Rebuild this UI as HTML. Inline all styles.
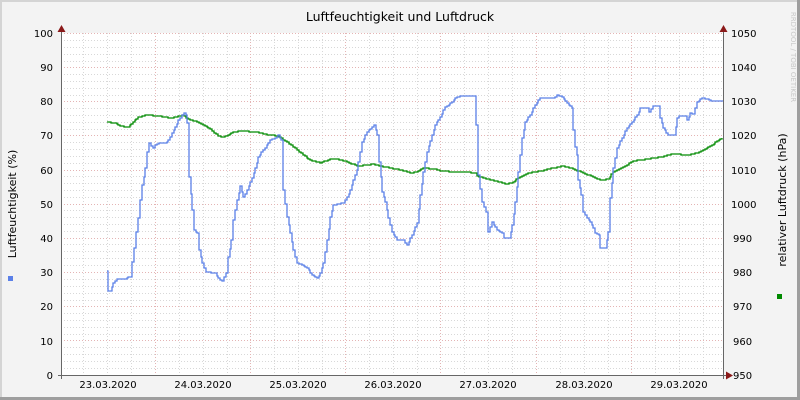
<!DOCTYPE html>
<html><head><meta charset="utf-8"><style>
html,body{margin:0;padding:0;background:#f3f3f3}
svg{display:block}
text{font-family:"DejaVu Sans","Liberation Sans",sans-serif;fill:#000}
</style></head><body>
<svg width="800" height="400" viewBox="0 0 800 400" xmlns="http://www.w3.org/2000/svg">
<rect x="0" y="0" width="800" height="400" fill="#f3f3f3"/>
<rect x="0" y="0" width="800" height="2" fill="#d4d4d4"/>
<rect x="0" y="0" width="2" height="400" fill="#d4d4d4"/>
<rect x="0" y="397" width="800" height="3" fill="#9e9e9e"/>
<rect x="797" y="0" width="3" height="400" fill="#9e9e9e"/>
<rect x="61" y="33" width="662" height="342" fill="#ffffff"/>
<g id="grid" stroke-width="1" shape-rendering="crispEdges">
<g stroke="#d8d8d8" stroke-dasharray="1,2">
<path d="M61 40.5H723M61 47.5H723M61 54.5H723M61 61.5H723M61 74.5H723M61 81.5H723M61 88.5H723M61 95.5H723M61 108.5H723M61 115.5H723M61 122.5H723M61 129.5H723M61 142.5H723M61 149.5H723M61 156.5H723M61 163.5H723M61 176.5H723M61 183.5H723M61 190.5H723M61 197.5H723M61 210.5H723M61 217.5H723M61 224.5H723M61 231.5H723M61 244.5H723M61 251.5H723M61 258.5H723M61 265.5H723M61 279.5H723M61 286.5H723M61 293.5H723M61 300.5H723M61 313.5H723M61 320.5H723M61 327.5H723M61 334.5H723M61 347.5H723M61 354.5H723M61 361.5H723M61 368.5H723"/>
<path d="M83.5 33V375M107.5 33V375M131.5 33V375M179.5 33V375M203.5 33V375M227.5 33V375M274.5 33V375M298.5 33V375M322.5 33V375M369.5 33V375M393.5 33V375M417.5 33V375M464.5 33V375M488.5 33V375M512.5 33V375M560.5 33V375M584.5 33V375M608.5 33V375M655.5 33V375M679.5 33V375M703.5 33V375"/>
</g>
<g stroke="#e4b4b4" stroke-dasharray="1,2">
<path d="M61 33.5H723M61 67.5H723M61 101.5H723M61 135.5H723M61 170.5H723M61 204.5H723M61 238.5H723M61 272.5H723M61 306.5H723M61 340.5H723"/>
<path d="M155.5 33V375M250.5 33V375M345.5 33V375M440.5 33V375M536.5 33V375M631.5 33V375"/>
</g>
</g>
<g fill="none" stroke-width="1.3" stroke-linejoin="miter" class="steps">
<polyline stroke="#008a00" points="107,122 115,123 120,126 128,127 133,122 138,117 147,115 158,116 170,118 182,115 188,119 197,122 203,125 210,129 218,136 223,137 228,135 233,132 240,131 257,132 263,134 277,136 287,142 295,148 303,155 310,160 320,163 330,159 337,159 347,162 357,166 365,165 373,164 385,167 395,169 405,171 412,173 418,171 423,168 435,169 442,171 455,172 465,172 475,173 477,176 488,179 498,182 507,184 513,182 518,178 528,173 540,171 553,168 563,166 573,169 583,173 593,177 600,180 608,179 613,172 623,167 633,161 647,159 660,157 673,154 687,155 697,153 703,150 710,146 717,141 722,138"/>
<polyline stroke="#5b80e8" points="107,271 108,291 110,291 113,283 117,279 125,279 128,277 132,277 132,262 134,248 136,232 138,218 140,200 142,185 145,168 147,152 149,143 153,148 155,145 159,143 165,143 168,140 172,133 175,127 178,120 182,115 184,113 186,115 187,123 189,177 192,210 194,230 197,233 199,250 202,263 206,272 215,273 218,278 222,281 226,273 228,257 231,240 233,220 237,200 240,186 243,197 247,190 252,178 255,168 258,157 263,150 270,140 275,138 278,135 281,140 283,190 287,217 290,233 293,250 297,263 302,265 307,268 312,275 317,278 320,273 323,263 327,240 330,217 333,205 343,203 347,197 350,190 353,180 357,170 358,162 362,142 367,132 372,127 374,125 377,135 379,162 382,192 385,202 388,218 392,232 397,240 403,240 407,245 412,235 417,223 420,195 423,172 427,152 432,135 435,125 440,117 445,107 452,102 455,98 460,96 474,96 476,125 478,175 482,202 486,212 488,232 492,222 497,230 502,233 504,238 509,238 512,225 515,202 518,172 522,138 525,122 530,115 535,105 540,98 553,98 557,95 562,97 567,103 572,108 573,130 575,147 577,155 578,180 581,195 583,212 587,218 590,222 593,228 595,233 599,235 600,248 605,248 608,232 610,198 613,168 617,148 622,138 627,128 632,122 637,115 640,108 647,108 649,112 653,106 658,106 660,118 663,128 668,135 674,135 677,118 679,116 685,116 687,120 690,113 693,114 697,102 702,98 707,99 711,101 723,101"/>
</g>
<g stroke="#666" stroke-width="1" shape-rendering="crispEdges">
<path d="M61.5 30V379M58 375.5H727M723.5 30V379"/>
</g>
<g fill="#8b1a1a">
<path d="M57.5 32L61.5 25L65.5 32Z"/>
<path d="M719.5 32L723.5 25L727.5 32Z"/>
<path d="M726 371.5L733 375.5L726 379.5Z"/>
</g>
<text x="400" y="21" font-size="12.5" text-anchor="middle">Luftfeuchtigkeit und Luftdruck</text>
<g font-size="10" text-anchor="end">
<text x="53" y="37">100</text><text x="53" y="71">90</text><text x="53" y="105">80</text><text x="53" y="139">70</text><text x="53" y="174">60</text><text x="53" y="208">50</text><text x="53" y="242">40</text><text x="53" y="276">30</text><text x="53" y="310">20</text><text x="53" y="345">10</text><text x="53" y="379">0</text>
</g>
<g font-size="10" text-anchor="start">
<text x="731" y="37">1050</text><text x="731" y="71">1040</text><text x="731" y="105">1030</text><text x="731" y="139">1020</text><text x="731" y="174">1010</text><text x="731" y="208">1000</text><text x="733" y="242">990</text><text x="733" y="276">980</text><text x="733" y="310">970</text><text x="733" y="345">960</text><text x="733" y="379">950</text>
</g>
<g font-size="10" text-anchor="middle">
<text x="108" y="388">23.03.2020</text><text x="203" y="388">24.03.2020</text><text x="298" y="388">25.03.2020</text><text x="393" y="388">26.03.2020</text><text x="488" y="388">27.03.2020</text><text x="584" y="388">28.03.2020</text><text x="679" y="388">29.03.2020</text>
</g>
<text transform="translate(16,204) rotate(-90)" font-size="11" text-anchor="middle">Luftfeuchtigkeit (%)</text>
<text transform="translate(786,200) rotate(-90)" font-size="11" text-anchor="middle">relativer Luftdruck (hPa)</text>
<rect x="8" y="276" width="5" height="5" fill="#5b80e8"/>
<rect x="777" y="294" width="5" height="5" fill="#008a00"/>
<text transform="translate(791,57) rotate(90)" font-size="7" text-anchor="middle" style="fill:#c8c8c8">RRDTOOL / TOBI OETIKER</text>
</svg>
<script>
document.querySelectorAll('.steps polyline').forEach(function(p){
  var pts=p.getAttribute('points').trim().split(/\s+/).map(function(s){return s.split(',').map(Number);});
  var out=[pts[0]];
  for(var i=1;i<pts.length;i++){
    var a=pts[i-1],b=pts[i];
    var n=Math.max(1,Math.round(Math.abs(b[0]-a[0])/2));
    for(var k=1;k<=n;k++){
      var x=a[0]+(b[0]-a[0])*k/n, y=a[1]+(b[1]-a[1])*k/n;
      var px=Math.round(x), py=Math.round(y);
      var last=out[out.length-1];
      out.push([px,last[1]]); out.push([px,py]);
    }
  }
  p.setAttribute('points',out.map(function(q){return q[0]+','+q[1];}).join(' '));
});
</script>
</body></html>
